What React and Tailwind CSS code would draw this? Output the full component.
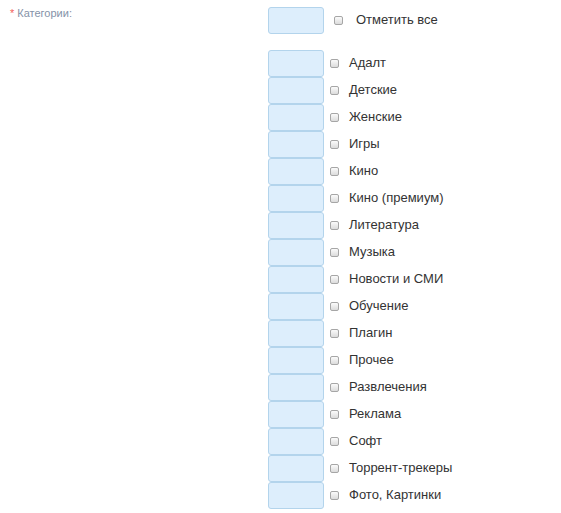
const categories = [
  'Адалт',
  'Детские',
  'Женские',
  'Игры',
  'Кино',
  'Кино (премиум)',
  'Литература',
  'Музыка',
  'Новости и СМИ',
  'Обучение',
  'Плагин',
  'Прочее',
  'Развлечения',
  'Реклама',
  'Софт',
  'Торрент-трекеры',
  'Фото, Картинки',
];

function Box() {
  return <div className="w-[56px] h-[27px] shrink-0 rounded-[3px] border border-[#b3d4ec] bg-[#ddeefc]" />;
}

function Check() {
  return (
    <span className="block w-[9px] h-[9px] shrink-0 rounded-[2px] border border-[#a6a6a6] bg-gradient-to-b from-[#fbfbfb] to-[#dcdcdc]" />
  );
}

export default function App() {
  return (
    <div className="w-[561px] h-[513px] bg-white flex font-['Liberation_Sans',Arial,sans-serif]">
      <div className="w-[268px] shrink-0 pl-[10px] pt-[5px] text-[11px] text-[#8592a8]">
        <span className="text-[#f3605a] mr-[3px]">*</span>Категории:
      </div>
      <div className="flex flex-col pt-[7px]">
        <div className="flex items-center h-[27px]">
          <Box />
          <span className="ml-[10px]"><Check /></span>
          <span className="ml-[13px] pb-[2px] text-[13px] text-[#333]">Отметить все</span>
        </div>
        <div className="flex flex-col mt-[16px]">
          {categories.map((c) => (
            <div key={c} className="flex items-center h-[27px]">
              <Box />
              <span className="ml-[6px]"><Check /></span>
              <span className="ml-[10px] pb-[2px] text-[13px] text-[#333]">{c}</span>
            </div>
          ))}
        </div>
      </div>
    </div>
  );
}
